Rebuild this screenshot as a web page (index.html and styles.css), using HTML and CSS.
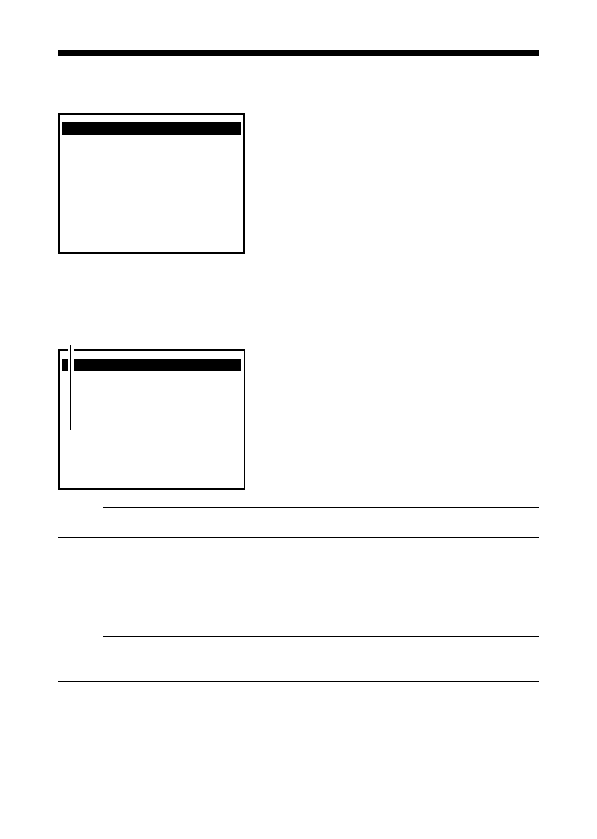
FILE: index.html
```html
<!DOCTYPE html>
<html lang="en">
<head>
    <meta charset="UTF-8">
    <meta name="viewport" content="width=device-width, initial-scale=1.0">
    <title>Menu screens</title>
    <link rel="stylesheet" href="styles.css">
</head>
<body>
    <main class="page">
        <hr class="header-rule">

        <section class="screen">
            <div class="screen-title"></div>
        </section>

        <section class="screen screen-callout">
            <div class="screen-title"></div>
            <div class="callout"></div>
        </section>

        <div class="note">
            <hr class="rule rule-indent">
            <hr class="rule">
        </div>

        <div class="note note-tall">
            <hr class="rule rule-indent">
            <hr class="rule">
        </div>
    </main>
</body>
</html>
```

FILE: styles.css
```css
body {
    margin: 0;
    background-color: #fff;
    font-family: "Liberation Sans", Arial, sans-serif;
}
.page {
    padding: 50px 58px;
}
hr {
    margin: 0;
    border: none;
    background-color: #000;
}
.header-rule {
    height: 6px;
    margin-bottom: 57px;
}
.screen {
    box-sizing: border-box;
    position: relative;
    width: 187px;
    max-width: 100%;
    min-height: 141px;
    padding: 7px 2px;
    border: 2px solid #000;
}
.screen-title {
    height: 13px;
    background-color: #000;
}
.screen-callout {
    margin-top: 95px;
    padding: 8px 2px;
    border-right-width: 1px;
}
.screen-callout .screen-title {
    height: 12px;
    margin-right: 1px;
}
/* pointer line that breaks through the frame and title bar */
.callout {
    position: absolute;
    top: -6px;
    left: 8px;
    width: 6px;
    height: 85px;
    background-color: #fff;
}
.callout::before {
    content: "";
    display: block;
    width: 1px;
    height: 100%;
    margin-left: 2px;
    background-color: #000;
}
.note {
    display: flex;
    flex-direction: column;
    gap: 29px;
    margin-top: 17px;
}
.note-tall {
    gap: 44px;
    margin-top: 98px;
}
.rule {
    height: 1px;
}
.rule-indent {
    margin-left: 45px;
}
```
